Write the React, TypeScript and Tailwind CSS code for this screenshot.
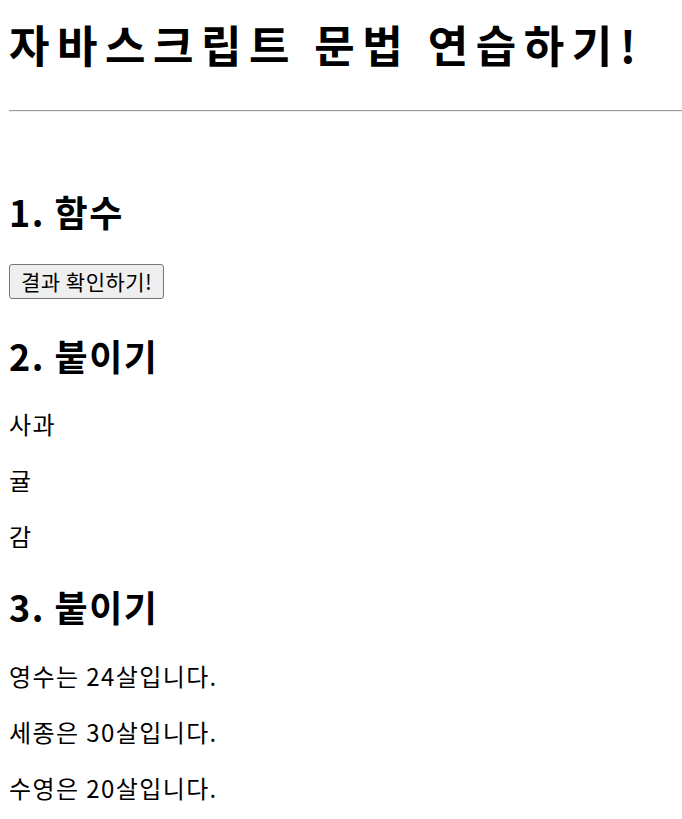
import React from 'react';

const font = { fontFamily: '"Noto Sans CJK KR", "Noto Sans", sans-serif' };

const fruits = ['사과', '귤', '감'];

const people = [
    { name: '영수', age: 24, josa: '는' },
    { name: '세종', age: 30, josa: '은' },
    { name: '수영', age: 20, josa: '은' },
];

const App: React.FC = () => {
    return (
        <div className="min-h-screen bg-white text-black pt-[12px] pl-[9px]" style={font}>
            <h1 className="text-[44px] font-bold leading-[64px] tracking-[7.5px]">자바스크립트 문법 연습하기!</h1>
            <hr className="mt-[34px] border-0 border-t border-t-[#9a9a9a] border-b border-b-[#eeeeee]" />

            <h2 className="mt-[75px] text-[36px] font-bold leading-[48px] tracking-[1.5px]">1. 함수</h2>
            <div className="mt-[29px]">
                <button className="h-[35px] px-[11px] text-[21px] leading-none tracking-[0.5px] bg-[#efefef] border border-[#767676] rounded-[3px] text-black">
                    결과 확인하기!
                </button>
            </div>

            <h2 className="mt-[32px] text-[36px] font-bold leading-[48px] tracking-[1.5px]">2. 붙이기</h2>
            <div className="mt-[29px] flex flex-col gap-[24px]">
                {fruits.map((f) => (
                    <p key={f} className="text-[24px] leading-[32px] tracking-[1.4px]">{f}</p>
                ))}
            </div>

            <h2 className="mt-[30px] text-[36px] font-bold leading-[48px] tracking-[1.5px]">3. 붙이기</h2>
            <div className="mt-[30px] flex flex-col gap-[24px]">
                {people.map((p) => (
                    <p key={p.name} className="text-[24px] leading-[32px] tracking-[1.4px]">
                        {p.name}{p.josa} {p.age}살입니다.
                    </p>
                ))}
            </div>
        </div>
    );
};

export default App;
